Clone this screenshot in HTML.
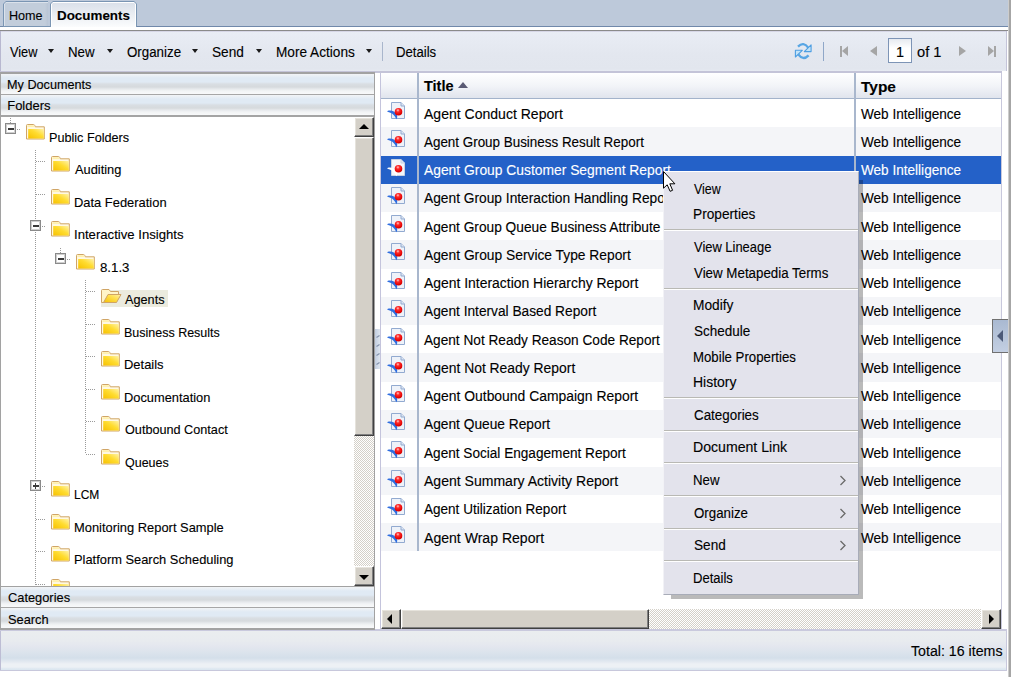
<!DOCTYPE html><html><head><meta charset="utf-8"><style>
html,body{margin:0;padding:0;width:1011px;height:677px;overflow:hidden;background:#fff;position:relative;font-family:"Liberation Sans", sans-serif;}
.t{position:absolute;white-space:nowrap;line-height:20px;}
div{box-sizing:border-box;}
</style></head><body>
<svg width="0" height="0" style="position:absolute"><defs>
<linearGradient id="fgrad" x1="0" y1="1" x2="1" y2="0"><stop offset="0" stop-color="#f7c100"/><stop offset="0.55" stop-color="#ffdc30"/><stop offset="1" stop-color="#fff2a8"/></linearGradient>
<linearGradient id="fgrad2" x1="0" y1="1" x2="1" y2="0"><stop offset="0" stop-color="#f5c000"/><stop offset="0.6" stop-color="#ffe050"/><stop offset="1" stop-color="#fff0b0"/></linearGradient>
<radialGradient id="ball" cx="0.42" cy="0.3" r="0.75"><stop offset="0" stop-color="#ffc8c8"/><stop offset="0.3" stop-color="#ff2a2a"/><stop offset="0.8" stop-color="#e00000"/><stop offset="1" stop-color="#b80000"/></radialGradient>
</defs></svg>
<div style="position:absolute;left:0px;top:0px;width:1011px;height:27px;background:#bdc9da;"></div>
<div style="position:absolute;left:0px;top:26px;width:50px;height:1px;background:#7088aa;"></div>
<div style="position:absolute;left:137px;top:26px;width:874px;height:1px;background:#7088aa;"></div>
<div style="position:absolute;left:0px;top:27px;width:1011px;height:3px;background:#fff;"></div>
<div style="position:absolute;left:0px;top:30px;width:1011px;height:1px;background:#8a8a8a;"></div>
<div style="position:absolute;left:3px;top:1px;width:45px;height:26px;background:#7a95b3;clip-path:polygon(3px 0,100% 0,100% 100%,0 100%,0 3px);"></div>
<div style="position:absolute;left:4px;top:2px;width:44px;height:24px;background:#dbe2eb;clip-path:polygon(2px 0,100% 0,100% 100%,0 100%,0 2px);"></div>
<div style="position:absolute;left:5px;top:3px;width:43px;height:23px;background:linear-gradient(90deg,#c2cddb 0,#c2cddb 40px,#b9c5d5 43px);clip-path:polygon(1px 0,100% 0,100% 100%,0 100%,0 1px);"></div>
<div style="position:absolute;left:3px;top:26px;width:48px;height:1px;background:#7a95b3;"></div>
<div class="t" style="left:9.23px;top:6px;font-size:13px;color:#000;font-weight:normal;transform:scaleX(0.9697);transform-origin:0 0;-webkit-text-stroke:0.12px currentColor;">Home</div>
<div style="position:absolute;left:50px;top:1px;width:87px;height:26px;background:#7a95b3;clip-path:polygon(3px 0,calc(100% - 3px) 0,100% 3px,100% 100%,0 100%,0 3px);"></div>
<div style="position:absolute;left:51px;top:2px;width:85px;height:25px;background:#ffffff;clip-path:polygon(2px 0,calc(100% - 2px) 0,100% 2px,100% 100%,0 100%,0 2px);"></div>
<div style="position:absolute;left:52px;top:3px;width:83px;height:24px;background:linear-gradient(#dbe1ea,#eef1f5 60%,#fbfcfd);clip-path:polygon(1px 0,calc(100% - 1px) 0,100% 1px,100% 100%,0 100%,0 1px);"></div>
<div class="t" style="left:57.47px;top:6px;font-size:13px;color:#000;font-weight:bold;transform:scaleX(1.0303);transform-origin:0 0;-webkit-text-stroke:0.12px currentColor;">Documents</div>
<div style="position:absolute;left:0px;top:31px;width:1007px;height:40px;background:linear-gradient(#e9edf5,#e3e7ef 60%,#e2e6ee 95%,#e7ebf2);border-left:1px solid #b8b8d0;border-right:1px solid #c4c4d8;"></div>
<div style="position:absolute;left:1px;top:31px;width:1005px;height:1px;background:#d6d6e6;"></div>
<div class="t" style="left:9.61px;top:42px;font-size:14px;color:#000;font-weight:normal;transform:scaleX(0.9100);transform-origin:0 0;-webkit-text-stroke:0.12px currentColor;">View</div>
<div style="position:absolute;left:48px;top:49px;width:0;height:0;border-left:3.5px solid transparent;border-right:3.5px solid transparent;border-top:4px solid #1a1a1a;"></div>
<div class="t" style="left:68.36px;top:42px;font-size:14px;color:#000;font-weight:normal;transform:scaleX(0.9480);transform-origin:0 0;-webkit-text-stroke:0.12px currentColor;">New</div>
<div style="position:absolute;left:107px;top:49px;width:0;height:0;border-left:3.5px solid transparent;border-right:3.5px solid transparent;border-top:4px solid #1a1a1a;"></div>
<div class="t" style="left:127.43px;top:42px;font-size:14px;color:#000;font-weight:normal;transform:scaleX(0.9514);transform-origin:0 0;-webkit-text-stroke:0.12px currentColor;">Organize</div>
<div style="position:absolute;left:192px;top:49px;width:0;height:0;border-left:3.5px solid transparent;border-right:3.5px solid transparent;border-top:4px solid #1a1a1a;"></div>
<div class="t" style="left:212.32px;top:42px;font-size:14px;color:#000;font-weight:normal;transform:scaleX(0.9743);transform-origin:0 0;-webkit-text-stroke:0.12px currentColor;">Send</div>
<div style="position:absolute;left:256px;top:49px;width:0;height:0;border-left:3.5px solid transparent;border-right:3.5px solid transparent;border-top:4px solid #1a1a1a;"></div>
<div class="t" style="left:276.03px;top:42px;font-size:14px;color:#000;font-weight:normal;transform:scaleX(0.9738);transform-origin:0 0;-webkit-text-stroke:0.12px currentColor;">More Actions</div>
<div style="position:absolute;left:366px;top:49px;width:0;height:0;border-left:3.5px solid transparent;border-right:3.5px solid transparent;border-top:4px solid #1a1a1a;"></div>
<div style="position:absolute;left:382px;top:42px;width:1px;height:19px;background:#a9b6cc;"></div>
<div class="t" style="left:396.27px;top:42px;font-size:14px;color:#000;font-weight:normal;transform:scaleX(0.9393);transform-origin:0 0;-webkit-text-stroke:0.12px currentColor;">Details</div>
<svg style="position:absolute;left:794px;top:42px" width="19" height="18" viewBox="0 0 19 18">
<path d="M4 4.6 Q9.5 -0.8 14.2 5.6" fill="none" stroke="#58a6e4" stroke-width="2.4"/>
<path d="M10.3 9.6 L17.1 9.6 L17.1 2.9 Z" fill="#c4e4f8" stroke="#4f9fe2" stroke-width="1.1" stroke-linejoin="round"/>
<path d="M14.6 13.3 Q9 19 4.3 12.4" fill="none" stroke="#58a6e4" stroke-width="2.4"/>
<path d="M8.3 8.3 L1.4 8.3 L1.4 15 Z" fill="#c4e4f8" stroke="#4f9fe2" stroke-width="1.1" stroke-linejoin="round"/>
</svg>
<div style="position:absolute;left:823px;top:42px;width:1px;height:19px;background:#8fa7c8;"></div>
<div style="position:absolute;left:840px;top:46px;width:2px;height:11px;background:#a5a5a5;"></div>
<div style="position:absolute;left:842px;top:46px;width:0;height:0;border-top:5.5px solid transparent;border-bottom:5.5px solid transparent;border-right:6px solid #a5a5a5;"></div>
<div style="position:absolute;left:870px;top:46px;width:0;height:0;border-top:5.5px solid transparent;border-bottom:5.5px solid transparent;border-right:7px solid #a5a5a5;"></div>
<div style="position:absolute;left:888px;top:38px;width:24px;height:25px;background:linear-gradient(#e6eaf0,#ffffff 40%);border:1px solid #7d94b6;"></div>
<div class="t" style="left:895.66px;top:42px;font-size:14px;color:#000;font-weight:normal;transform:scaleX(1.0333);transform-origin:0 0;-webkit-text-stroke:0.12px currentColor;">1</div>
<div class="t" style="left:917.17px;top:42px;font-size:14px;color:#000;font-weight:normal;transform:scaleX(1.0452);transform-origin:0 0;-webkit-text-stroke:0.12px currentColor;">of 1</div>
<div style="position:absolute;left:959px;top:46px;width:0;height:0;border-top:5.5px solid transparent;border-bottom:5.5px solid transparent;border-left:7px solid #a5a5a5;"></div>
<div style="position:absolute;left:988px;top:46px;width:0;height:0;border-top:5.5px solid transparent;border-bottom:5.5px solid transparent;border-left:6px solid #a5a5a5;"></div>
<div style="position:absolute;left:994px;top:46px;width:2px;height:11px;background:#a5a5a5;"></div>
<div style="position:absolute;left:1008px;top:0px;width:3px;height:677px;background:linear-gradient(90deg,#cdcdcd 0 1px,#a6a6a6 1px 3px);"></div>
<div style="position:absolute;left:0px;top:71px;width:1002px;height:2px;background:#c4c4d8;"></div>
<div style="position:absolute;left:0px;top:72px;width:375px;height:2px;background:#a2a2a2;"></div>
<div style="position:absolute;left:0px;top:74px;width:374px;height:20px;background:linear-gradient(#f2f4f6 0px,#e9eff5 2px,#e0eaf4 4px,#e0eaf4 8px,#d9dee3 10px,#d6dadd 13px,#e6e9ec 15px,#f2f4f5 17px,#f8f9fa 20px);"></div>
<div class="t" style="left:7.23px;top:75px;font-size:13px;color:#000;font-weight:normal;transform:scaleX(0.9741);transform-origin:0 0;-webkit-text-stroke:0.12px currentColor;">My Documents</div>
<div style="position:absolute;left:0px;top:94px;width:375px;height:1px;background:#a6a6a6;"></div>
<div style="position:absolute;left:0px;top:95px;width:374px;height:20px;background:linear-gradient(#f2f4f6 0px,#e9eff5 2px,#e0eaf4 4px,#e0eaf4 8px,#d9dee3 10px,#d6dadd 13px,#e6e9ec 15px,#f2f4f5 17px,#f8f9fa 20px);"></div>
<div class="t" style="left:7.20px;top:96px;font-size:13px;color:#000;font-weight:normal;-webkit-text-stroke:0.12px currentColor;">Folders</div>
<div style="position:absolute;left:0px;top:115px;width:375px;height:2px;background:#a4a4a4;"></div>
<div style="position:absolute;left:0px;top:117px;width:374px;height:469px;background:#fff;"></div>
<div style="position:absolute;left:0;top:116px;width:354px;height:470px;overflow:hidden;">
<div style="position:absolute;left:10px;top:2px;width:1px;height:5px;background:repeating-linear-gradient(180deg,#9a9a9a 0 1px,transparent 1px 2px);"></div>
<div style="position:absolute;left:35px;top:34px;width:1px;height:436px;background:repeating-linear-gradient(180deg,#9a9a9a 0 1px,transparent 1px 2px);"></div>
<div style="position:absolute;left:60px;top:132px;width:1px;height:5px;background:repeating-linear-gradient(180deg,#9a9a9a 0 1px,transparent 1px 2px);"></div>
<div style="position:absolute;left:85px;top:164px;width:1px;height:174px;background:repeating-linear-gradient(180deg,#9a9a9a 0 1px,transparent 1px 2px);"></div>
<div style="position:absolute;left:5px;top:7px;width:11px;height:11px;background:#fff;border:1px solid #8a8a8a;box-shadow:inset 0 0 0 1px #cfcfcf;"><div style="position:absolute;left:1.5px;top:3.8px;width:6px;height:1.8px;background:#3a3a3a;"></div></div>
<div style="position:absolute;left:17px;top:13px;width:4px;height:1px;background:repeating-linear-gradient(90deg,#9a9a9a 0 1px,transparent 1px 2px);"></div>
<svg style="position:absolute;left:26px;top:8px" width="20" height="17" viewBox="0 0 20 17">
<path d="M0.5 15 V1.5 Q0.5 0.5 1.5 0.5 H7.5 Q8.3 0.5 8.8 1.5 L9.3 2.8 H18.3 V15 Z" fill="#fff8e2" stroke="#d0a566" stroke-width="1"/>
<rect x="1.5" y="1.3" width="6.6" height="1.6" fill="#fff0a8"/>
<rect x="2.2" y="5" width="15.6" height="9.5" fill="url(#fgrad)"/>
</svg>
<div class="t" style="left:49.18px;top:12px;font-size:13px;color:#000;font-weight:normal;transform:scaleX(0.9722);transform-origin:0 0;-webkit-text-stroke:0.12px currentColor;">Public Folders</div>
<div style="position:absolute;left:36px;top:45px;width:9px;height:1px;background:repeating-linear-gradient(90deg,#9a9a9a 0 1px,transparent 1px 2px);"></div>
<svg style="position:absolute;left:51px;top:40px" width="20" height="17" viewBox="0 0 20 17">
<path d="M0.5 15 V1.5 Q0.5 0.5 1.5 0.5 H7.5 Q8.3 0.5 8.8 1.5 L9.3 2.8 H18.3 V15 Z" fill="#fff8e2" stroke="#d0a566" stroke-width="1"/>
<rect x="1.5" y="1.3" width="6.6" height="1.6" fill="#fff0a8"/>
<rect x="2.2" y="5" width="15.6" height="9.5" fill="url(#fgrad)"/>
</svg>
<div class="t" style="left:75.25px;top:44px;font-size:13px;color:#000;font-weight:normal;transform:scaleX(0.9859);transform-origin:0 0;-webkit-text-stroke:0.12px currentColor;">Auditing</div>
<div style="position:absolute;left:36px;top:78px;width:9px;height:1px;background:repeating-linear-gradient(90deg,#9a9a9a 0 1px,transparent 1px 2px);"></div>
<svg style="position:absolute;left:51px;top:73px" width="20" height="17" viewBox="0 0 20 17">
<path d="M0.5 15 V1.5 Q0.5 0.5 1.5 0.5 H7.5 Q8.3 0.5 8.8 1.5 L9.3 2.8 H18.3 V15 Z" fill="#fff8e2" stroke="#d0a566" stroke-width="1"/>
<rect x="1.5" y="1.3" width="6.6" height="1.6" fill="#fff0a8"/>
<rect x="2.2" y="5" width="15.6" height="9.5" fill="url(#fgrad)"/>
</svg>
<div class="t" style="left:74.16px;top:77px;font-size:13px;color:#000;font-weight:normal;transform:scaleX(0.9929);transform-origin:0 0;-webkit-text-stroke:0.12px currentColor;">Data Federation</div>
<div style="position:absolute;left:30px;top:104px;width:11px;height:11px;background:#fff;border:1px solid #8a8a8a;box-shadow:inset 0 0 0 1px #cfcfcf;"><div style="position:absolute;left:1.5px;top:3.8px;width:6px;height:1.8px;background:#3a3a3a;"></div></div>
<div style="position:absolute;left:42px;top:110px;width:4px;height:1px;background:repeating-linear-gradient(90deg,#9a9a9a 0 1px,transparent 1px 2px);"></div>
<svg style="position:absolute;left:51px;top:105px" width="20" height="17" viewBox="0 0 20 17">
<path d="M0.5 15 V1.5 Q0.5 0.5 1.5 0.5 H7.5 Q8.3 0.5 8.8 1.5 L9.3 2.8 H18.3 V15 Z" fill="#fff8e2" stroke="#d0a566" stroke-width="1"/>
<rect x="1.5" y="1.3" width="6.6" height="1.6" fill="#fff0a8"/>
<rect x="2.2" y="5" width="15.6" height="9.5" fill="url(#fgrad)"/>
</svg>
<div class="t" style="left:74.04px;top:109px;font-size:13px;color:#000;font-weight:normal;transform:scaleX(1.0108);transform-origin:0 0;-webkit-text-stroke:0.12px currentColor;">Interactive Insights</div>
<div style="position:absolute;left:55px;top:137px;width:11px;height:11px;background:#fff;border:1px solid #8a8a8a;box-shadow:inset 0 0 0 1px #cfcfcf;"><div style="position:absolute;left:1.5px;top:3.8px;width:6px;height:1.8px;background:#3a3a3a;"></div></div>
<div style="position:absolute;left:67px;top:143px;width:4px;height:1px;background:repeating-linear-gradient(90deg,#9a9a9a 0 1px,transparent 1px 2px);"></div>
<svg style="position:absolute;left:76px;top:138px" width="20" height="17" viewBox="0 0 20 17">
<path d="M0.5 15 V1.5 Q0.5 0.5 1.5 0.5 H7.5 Q8.3 0.5 8.8 1.5 L9.3 2.8 H18.3 V15 Z" fill="#fff8e2" stroke="#d0a566" stroke-width="1"/>
<rect x="1.5" y="1.3" width="6.6" height="1.6" fill="#fff0a8"/>
<rect x="2.2" y="5" width="15.6" height="9.5" fill="url(#fgrad)"/>
</svg>
<div class="t" style="left:99.64px;top:142px;font-size:13px;color:#000;font-weight:normal;transform:scaleX(1.0199);transform-origin:0 0;-webkit-text-stroke:0.12px currentColor;">8.1.3</div>
<div style="position:absolute;left:86px;top:175px;width:9px;height:1px;background:repeating-linear-gradient(90deg,#9a9a9a 0 1px,transparent 1px 2px);"></div>
<div style="position:absolute;left:101px;top:174px;width:67px;height:17px;background:#ebebde;"></div>
<svg style="position:absolute;left:101px;top:173px" width="22" height="16" viewBox="0 0 22 16">
<path d="M0.5 13.5 V1.5 Q0.5 0.5 1.5 0.5 H8 L9.5 2.5 H17.5 V5.5 L3 13.5 Z" fill="#fff4c8" stroke="#cfa465" stroke-width="1"/>
<path d="M2.5 13.5 L7 5.5 H20 L15.5 13.5 Z" fill="url(#fgrad2)" stroke="#cfa465" stroke-width="1"/>
</svg>
<div class="t" style="left:125.25px;top:174px;font-size:13px;color:#000;font-weight:normal;transform:scaleX(0.9763);transform-origin:0 0;-webkit-text-stroke:0.12px currentColor;">Agents</div>
<div style="position:absolute;left:86px;top:208px;width:9px;height:1px;background:repeating-linear-gradient(90deg,#9a9a9a 0 1px,transparent 1px 2px);"></div>
<svg style="position:absolute;left:101px;top:203px" width="20" height="17" viewBox="0 0 20 17">
<path d="M0.5 15 V1.5 Q0.5 0.5 1.5 0.5 H7.5 Q8.3 0.5 8.8 1.5 L9.3 2.8 H18.3 V15 Z" fill="#fff8e2" stroke="#d0a566" stroke-width="1"/>
<rect x="1.5" y="1.3" width="6.6" height="1.6" fill="#fff0a8"/>
<rect x="2.2" y="5" width="15.6" height="9.5" fill="url(#fgrad)"/>
</svg>
<div class="t" style="left:124.19px;top:207px;font-size:13px;color:#000;font-weight:normal;transform:scaleX(0.9608);transform-origin:0 0;-webkit-text-stroke:0.12px currentColor;">Business Results</div>
<div style="position:absolute;left:86px;top:240px;width:9px;height:1px;background:repeating-linear-gradient(90deg,#9a9a9a 0 1px,transparent 1px 2px);"></div>
<svg style="position:absolute;left:101px;top:235px" width="20" height="17" viewBox="0 0 20 17">
<path d="M0.5 15 V1.5 Q0.5 0.5 1.5 0.5 H7.5 Q8.3 0.5 8.8 1.5 L9.3 2.8 H18.3 V15 Z" fill="#fff8e2" stroke="#d0a566" stroke-width="1"/>
<rect x="1.5" y="1.3" width="6.6" height="1.6" fill="#fff0a8"/>
<rect x="2.2" y="5" width="15.6" height="9.5" fill="url(#fgrad)"/>
</svg>
<div class="t" style="left:124.15px;top:239px;font-size:13px;color:#000;font-weight:normal;transform:scaleX(0.9961);transform-origin:0 0;-webkit-text-stroke:0.12px currentColor;">Details</div>
<div style="position:absolute;left:86px;top:273px;width:9px;height:1px;background:repeating-linear-gradient(90deg,#9a9a9a 0 1px,transparent 1px 2px);"></div>
<svg style="position:absolute;left:101px;top:268px" width="20" height="17" viewBox="0 0 20 17">
<path d="M0.5 15 V1.5 Q0.5 0.5 1.5 0.5 H7.5 Q8.3 0.5 8.8 1.5 L9.3 2.8 H18.3 V15 Z" fill="#fff8e2" stroke="#d0a566" stroke-width="1"/>
<rect x="1.5" y="1.3" width="6.6" height="1.6" fill="#fff0a8"/>
<rect x="2.2" y="5" width="15.6" height="9.5" fill="url(#fgrad)"/>
</svg>
<div class="t" style="left:124.16px;top:272px;font-size:13px;color:#000;font-weight:normal;transform:scaleX(0.9877);transform-origin:0 0;-webkit-text-stroke:0.12px currentColor;">Documentation</div>
<div style="position:absolute;left:86px;top:305px;width:9px;height:1px;background:repeating-linear-gradient(90deg,#9a9a9a 0 1px,transparent 1px 2px);"></div>
<svg style="position:absolute;left:101px;top:300px" width="20" height="17" viewBox="0 0 20 17">
<path d="M0.5 15 V1.5 Q0.5 0.5 1.5 0.5 H7.5 Q8.3 0.5 8.8 1.5 L9.3 2.8 H18.3 V15 Z" fill="#fff8e2" stroke="#d0a566" stroke-width="1"/>
<rect x="1.5" y="1.3" width="6.6" height="1.6" fill="#fff0a8"/>
<rect x="2.2" y="5" width="15.6" height="9.5" fill="url(#fgrad)"/>
</svg>
<div class="t" style="left:124.67px;top:304px;font-size:13px;color:#000;font-weight:normal;transform:scaleX(0.9738);transform-origin:0 0;-webkit-text-stroke:0.12px currentColor;">Outbound Contact</div>
<div style="position:absolute;left:86px;top:338px;width:9px;height:1px;background:repeating-linear-gradient(90deg,#9a9a9a 0 1px,transparent 1px 2px);"></div>
<svg style="position:absolute;left:101px;top:333px" width="20" height="17" viewBox="0 0 20 17">
<path d="M0.5 15 V1.5 Q0.5 0.5 1.5 0.5 H7.5 Q8.3 0.5 8.8 1.5 L9.3 2.8 H18.3 V15 Z" fill="#fff8e2" stroke="#d0a566" stroke-width="1"/>
<rect x="1.5" y="1.3" width="6.6" height="1.6" fill="#fff0a8"/>
<rect x="2.2" y="5" width="15.6" height="9.5" fill="url(#fgrad)"/>
</svg>
<div class="t" style="left:124.67px;top:337px;font-size:13px;color:#000;font-weight:normal;transform:scaleX(0.9606);transform-origin:0 0;-webkit-text-stroke:0.12px currentColor;">Queues</div>
<div style="position:absolute;left:30px;top:364px;width:11px;height:11px;background:#fff;border:1px solid #8a8a8a;box-shadow:inset 0 0 0 1px #cfcfcf;"><div style="position:absolute;left:1.5px;top:3.8px;width:6px;height:1.8px;background:#3a3a3a;"></div><div style="position:absolute;left:3.6px;top:1.7px;width:1.8px;height:6px;background:#3a3a3a;"></div></div>
<div style="position:absolute;left:42px;top:370px;width:4px;height:1px;background:repeating-linear-gradient(90deg,#9a9a9a 0 1px,transparent 1px 2px);"></div>
<svg style="position:absolute;left:51px;top:365px" width="20" height="17" viewBox="0 0 20 17">
<path d="M0.5 15 V1.5 Q0.5 0.5 1.5 0.5 H7.5 Q8.3 0.5 8.8 1.5 L9.3 2.8 H18.3 V15 Z" fill="#fff8e2" stroke="#d0a566" stroke-width="1"/>
<rect x="1.5" y="1.3" width="6.6" height="1.6" fill="#fff0a8"/>
<rect x="2.2" y="5" width="15.6" height="9.5" fill="url(#fgrad)"/>
</svg>
<div class="t" style="left:74.23px;top:369px;font-size:13px;color:#000;font-weight:normal;transform:scaleX(0.9229);transform-origin:0 0;-webkit-text-stroke:0.12px currentColor;">LCM</div>
<div style="position:absolute;left:36px;top:403px;width:9px;height:1px;background:repeating-linear-gradient(90deg,#9a9a9a 0 1px,transparent 1px 2px);"></div>
<svg style="position:absolute;left:51px;top:398px" width="20" height="17" viewBox="0 0 20 17">
<path d="M0.5 15 V1.5 Q0.5 0.5 1.5 0.5 H7.5 Q8.3 0.5 8.8 1.5 L9.3 2.8 H18.3 V15 Z" fill="#fff8e2" stroke="#d0a566" stroke-width="1"/>
<rect x="1.5" y="1.3" width="6.6" height="1.6" fill="#fff0a8"/>
<rect x="2.2" y="5" width="15.6" height="9.5" fill="url(#fgrad)"/>
</svg>
<div class="t" style="left:74.16px;top:402px;font-size:13px;color:#000;font-weight:normal;transform:scaleX(0.9916);transform-origin:0 0;-webkit-text-stroke:0.12px currentColor;">Monitoring Report Sample</div>
<div style="position:absolute;left:36px;top:435px;width:9px;height:1px;background:repeating-linear-gradient(90deg,#9a9a9a 0 1px,transparent 1px 2px);"></div>
<svg style="position:absolute;left:51px;top:430px" width="20" height="17" viewBox="0 0 20 17">
<path d="M0.5 15 V1.5 Q0.5 0.5 1.5 0.5 H7.5 Q8.3 0.5 8.8 1.5 L9.3 2.8 H18.3 V15 Z" fill="#fff8e2" stroke="#d0a566" stroke-width="1"/>
<rect x="1.5" y="1.3" width="6.6" height="1.6" fill="#fff0a8"/>
<rect x="2.2" y="5" width="15.6" height="9.5" fill="url(#fgrad)"/>
</svg>
<div class="t" style="left:74.16px;top:434px;font-size:13px;color:#000;font-weight:normal;transform:scaleX(0.9896);transform-origin:0 0;-webkit-text-stroke:0.12px currentColor;">Platform Search Scheduling</div>
<div style="position:absolute;left:36px;top:468px;width:9px;height:1px;background:repeating-linear-gradient(90deg,#9a9a9a 0 1px,transparent 1px 2px);"></div>
<svg style="position:absolute;left:51px;top:463px" width="20" height="17" viewBox="0 0 20 17">
<path d="M0.5 15 V1.5 Q0.5 0.5 1.5 0.5 H7.5 Q8.3 0.5 8.8 1.5 L9.3 2.8 H18.3 V15 Z" fill="#fff8e2" stroke="#d0a566" stroke-width="1"/>
<rect x="1.5" y="1.3" width="6.6" height="1.6" fill="#fff0a8"/>
<rect x="2.2" y="5" width="15.6" height="9.5" fill="url(#fgrad)"/>
</svg>
</div>
<div style="position:absolute;left:354px;top:117px;width:20px;height:469px;background:repeating-conic-gradient(#d4d0c8 0 25%, #ffffff 0 50%) 0 0/2px 2px;"></div>
<div style="position:absolute;left:354px;top:117px;width:20px;height:20px;background:#d4d0c8;border-top:1px solid #fff;border-left:1px solid #fff;border-right:1px solid #404040;border-bottom:1px solid #404040;box-shadow:inset -1px -1px 0 #808080, inset 1px 1px 0 #e6e3dc;"></div>
<div style="position:absolute;left:359px;top:124px;width:0;height:0;border-left:5px solid transparent;border-right:5px solid transparent;border-bottom:5px solid #000;"></div>
<div style="position:absolute;left:354px;top:137px;width:20px;height:299px;background:#d4d0c8;border-top:1px solid #fff;border-left:1px solid #fff;border-right:1px solid #404040;border-bottom:1px solid #404040;box-shadow:inset -1px -1px 0 #808080, inset 1px 1px 0 #e6e3dc;"></div>
<div style="position:absolute;left:354px;top:566px;width:20px;height:20px;background:#d4d0c8;border-top:1px solid #fff;border-left:1px solid #fff;border-right:1px solid #404040;border-bottom:1px solid #404040;box-shadow:inset -1px -1px 0 #808080, inset 1px 1px 0 #e6e3dc;"></div>
<div style="position:absolute;left:359px;top:575px;width:0;height:0;border-left:5px solid transparent;border-right:5px solid transparent;border-top:5px solid #000;"></div>
<div style="position:absolute;left:0px;top:586px;width:375px;height:1px;background:#a2a2a2;"></div>
<div style="position:absolute;left:0px;top:587px;width:374px;height:20px;background:linear-gradient(#f2f4f6 0px,#e9eff5 2px,#e0eaf4 4px,#e0eaf4 8px,#d9dee3 10px,#d6dadd 13px,#e6e9ec 15px,#f2f4f5 17px,#f8f9fa 20px);"></div>
<div class="t" style="left:7.61px;top:588px;font-size:13px;color:#000;font-weight:normal;transform:scaleX(0.9870);transform-origin:0 0;-webkit-text-stroke:0.12px currentColor;">Categories</div>
<div style="position:absolute;left:0px;top:607px;width:375px;height:1px;background:#a6a6a6;"></div>
<div style="position:absolute;left:0px;top:608px;width:374px;height:20px;background:linear-gradient(#f2f4f6 0px,#e9eff5 2px,#e0eaf4 4px,#e0eaf4 8px,#d9dee3 10px,#d6dadd 13px,#e6e9ec 15px,#f2f4f5 17px,#f8f9fa 20px);"></div>
<div class="t" style="left:7.71px;top:610px;font-size:13px;color:#000;font-weight:normal;transform:scaleX(0.9874);transform-origin:0 0;-webkit-text-stroke:0.12px currentColor;">Search</div>
<div style="position:absolute;left:0px;top:628px;width:375px;height:2px;background:#a2a2a2;"></div>
<div style="position:absolute;left:0px;top:72px;width:1px;height:558px;background:#a2a2a2;"></div>
<div style="position:absolute;left:374px;top:72px;width:1px;height:558px;background:#a2a2a2;"></div>
<div style="position:absolute;left:380px;top:73px;width:1px;height:557px;background:#c4c4dc;"></div>
<div style="position:absolute;left:375px;top:329px;width:5px;height:40px;background:linear-gradient(90deg,#c2cee0,#dde5ef);"></div>
<svg style="position:absolute;left:376px;top:335px" width="4" height="3" viewBox="0 0 4 3"><path d="M0.5 2.5 L3.5 0.5" stroke="#8392ac" stroke-width="1.2"/></svg>
<svg style="position:absolute;left:376px;top:344px" width="4" height="3" viewBox="0 0 4 3"><path d="M0.5 2.5 L3.5 0.5" stroke="#8392ac" stroke-width="1.2"/></svg>
<svg style="position:absolute;left:376px;top:353px" width="4" height="3" viewBox="0 0 4 3"><path d="M0.5 2.5 L3.5 0.5" stroke="#8392ac" stroke-width="1.2"/></svg>
<svg style="position:absolute;left:376px;top:362px" width="4" height="3" viewBox="0 0 4 3"><path d="M0.5 2.5 L3.5 0.5" stroke="#8392ac" stroke-width="1.2"/></svg>
<div style="position:absolute;left:381px;top:73px;width:620px;height:26px;background:linear-gradient(#ffffff,#f2f4f8 50%,#dfe3ec);"></div>
<div style="position:absolute;left:381px;top:98px;width:620px;height:1px;background:#a3b3cb;"></div>
<div class="t" style="left:423.99px;top:76px;font-size:14px;color:#000;font-weight:bold;transform:scaleX(1.0358);transform-origin:0 0;-webkit-text-stroke:0.12px currentColor;">Title</div>
<div style="position:absolute;left:457.5px;top:82px;width:0;height:0;border-left:5px solid transparent;border-right:5px solid transparent;border-bottom:6px solid #5a5a74;"></div>
<div class="t" style="left:860.78px;top:77px;font-size:14px;color:#000;font-weight:bold;transform:scaleX(1.1032);transform-origin:0 0;-webkit-text-stroke:0.12px currentColor;">Type</div>
<div style="position:absolute;left:381px;top:99.00px;width:620px;height:28.27px;background:#ffffff;"></div>
<svg style="position:absolute;left:387px;top:101px" width="20" height="20" viewBox="0 0 20 20">
<path d="M4.5 1.5 H14 L17.5 5 V17.5 H4.5 Z" fill="#eef2f9" stroke="#92aad0" stroke-width="1"/>
<path d="M14 1.5 V5 H17.5" fill="#dde6f2" stroke="#92aad0" stroke-width="1"/>
<path d="M0.4 9.9 C4 8.8 8 10 9.8 13.8 C10.6 15.5 10.3 17.3 9.3 18.3 C8.3 16 7 13.8 5 12.5 C3.5 11.5 2 11 0.4 10.7 Z" fill="#2f6ee0"/>
<circle cx="11.5" cy="10.8" r="3.8" fill="url(#ball)"/>
</svg>
<div class="t" style="left:424.00px;top:104px;font-size:14px;color:#000;font-weight:normal;transform:scaleX(1.0022);transform-origin:0 0;-webkit-text-stroke:0.12px currentColor;">Agent Conduct Report</div>
<div class="t" style="left:861.30px;top:104px;font-size:14px;color:#000;font-weight:normal;transform:scaleX(0.9698);transform-origin:0 0;-webkit-text-stroke:0.12px currentColor;">Web Intelligence</div>
<div style="position:absolute;left:381px;top:127.27px;width:620px;height:28.27px;background:#f4f5f8;"></div>
<svg style="position:absolute;left:387px;top:129px" width="20" height="20" viewBox="0 0 20 20">
<path d="M4.5 1.5 H14 L17.5 5 V17.5 H4.5 Z" fill="#eef2f9" stroke="#92aad0" stroke-width="1"/>
<path d="M14 1.5 V5 H17.5" fill="#dde6f2" stroke="#92aad0" stroke-width="1"/>
<path d="M0.4 9.9 C4 8.8 8 10 9.8 13.8 C10.6 15.5 10.3 17.3 9.3 18.3 C8.3 16 7 13.8 5 12.5 C3.5 11.5 2 11 0.4 10.7 Z" fill="#2f6ee0"/>
<circle cx="11.5" cy="10.8" r="3.8" fill="url(#ball)"/>
</svg>
<div class="t" style="left:424.00px;top:132px;font-size:14px;color:#000;font-weight:normal;transform:scaleX(0.9577);transform-origin:0 0;-webkit-text-stroke:0.12px currentColor;">Agent Group Business Result Report</div>
<div class="t" style="left:861.30px;top:132px;font-size:14px;color:#000;font-weight:normal;transform:scaleX(0.9698);transform-origin:0 0;-webkit-text-stroke:0.12px currentColor;">Web Intelligence</div>
<div style="position:absolute;left:381px;top:155.54px;width:620px;height:28.27px;background:#2461c8;"></div>
<svg style="position:absolute;left:387px;top:158px" width="20" height="20" viewBox="0 0 20 20">
<path d="M4.5 1.5 H14 L17.5 5 V17.5 H4.5 Z" fill="#f4f6fa" stroke="#c8d2e2" stroke-width="1"/>
<path d="M14 1.5 V5 H17.5" fill="#dde6f2" stroke="#c8d2e2" stroke-width="1"/>
<path d="M0.4 9.9 C4 8.8 8 10 9.8 13.8 C10.6 15.5 10.3 17.3 9.3 18.3 C8.3 16 7 13.8 5 12.5 C3.5 11.5 2 11 0.4 10.7 Z" fill="#ffffff"/>
<circle cx="11.5" cy="10.8" r="3.8" fill="url(#ball)"/>
</svg>
<div class="t" style="left:424.00px;top:160px;font-size:14px;color:#fff;font-weight:normal;transform:scaleX(0.9884);transform-origin:0 0;-webkit-text-stroke:0.12px currentColor;">Agent Group Customer Segment Report</div>
<div class="t" style="left:861.30px;top:160px;font-size:14px;color:#fff;font-weight:normal;transform:scaleX(0.9698);transform-origin:0 0;-webkit-text-stroke:0.12px currentColor;">Web Intelligence</div>
<div style="position:absolute;left:381px;top:183.81px;width:620px;height:28.27px;background:#f4f5f8;"></div>
<svg style="position:absolute;left:387px;top:186px" width="20" height="20" viewBox="0 0 20 20">
<path d="M4.5 1.5 H14 L17.5 5 V17.5 H4.5 Z" fill="#eef2f9" stroke="#92aad0" stroke-width="1"/>
<path d="M14 1.5 V5 H17.5" fill="#dde6f2" stroke="#92aad0" stroke-width="1"/>
<path d="M0.4 9.9 C4 8.8 8 10 9.8 13.8 C10.6 15.5 10.3 17.3 9.3 18.3 C8.3 16 7 13.8 5 12.5 C3.5 11.5 2 11 0.4 10.7 Z" fill="#2f6ee0"/>
<circle cx="11.5" cy="10.8" r="3.8" fill="url(#ball)"/>
</svg>
<div class="t" style="left:424.00px;top:188px;font-size:14px;color:#000;font-weight:normal;transform:scaleX(0.9826);transform-origin:0 0;-webkit-text-stroke:0.12px currentColor;">Agent Group Interaction Handling Report</div>
<div class="t" style="left:861.30px;top:188px;font-size:14px;color:#000;font-weight:normal;transform:scaleX(0.9698);transform-origin:0 0;-webkit-text-stroke:0.12px currentColor;">Web Intelligence</div>
<div style="position:absolute;left:381px;top:212.08px;width:620px;height:28.27px;background:#ffffff;"></div>
<svg style="position:absolute;left:387px;top:214px" width="20" height="20" viewBox="0 0 20 20">
<path d="M4.5 1.5 H14 L17.5 5 V17.5 H4.5 Z" fill="#eef2f9" stroke="#92aad0" stroke-width="1"/>
<path d="M14 1.5 V5 H17.5" fill="#dde6f2" stroke="#92aad0" stroke-width="1"/>
<path d="M0.4 9.9 C4 8.8 8 10 9.8 13.8 C10.6 15.5 10.3 17.3 9.3 18.3 C8.3 16 7 13.8 5 12.5 C3.5 11.5 2 11 0.4 10.7 Z" fill="#2f6ee0"/>
<circle cx="11.5" cy="10.8" r="3.8" fill="url(#ball)"/>
</svg>
<div class="t" style="left:424.00px;top:217px;font-size:14px;color:#000;font-weight:normal;transform:scaleX(0.9800);transform-origin:0 0;-webkit-text-stroke:0.12px currentColor;">Agent Group Queue Business Attribute Report</div>
<div class="t" style="left:861.30px;top:217px;font-size:14px;color:#000;font-weight:normal;transform:scaleX(0.9698);transform-origin:0 0;-webkit-text-stroke:0.12px currentColor;">Web Intelligence</div>
<div style="position:absolute;left:381px;top:240.35px;width:620px;height:28.27px;background:#f4f5f8;"></div>
<svg style="position:absolute;left:387px;top:242px" width="20" height="20" viewBox="0 0 20 20">
<path d="M4.5 1.5 H14 L17.5 5 V17.5 H4.5 Z" fill="#eef2f9" stroke="#92aad0" stroke-width="1"/>
<path d="M14 1.5 V5 H17.5" fill="#dde6f2" stroke="#92aad0" stroke-width="1"/>
<path d="M0.4 9.9 C4 8.8 8 10 9.8 13.8 C10.6 15.5 10.3 17.3 9.3 18.3 C8.3 16 7 13.8 5 12.5 C3.5 11.5 2 11 0.4 10.7 Z" fill="#2f6ee0"/>
<circle cx="11.5" cy="10.8" r="3.8" fill="url(#ball)"/>
</svg>
<div class="t" style="left:424.00px;top:245px;font-size:14px;color:#000;font-weight:normal;transform:scaleX(0.9852);transform-origin:0 0;-webkit-text-stroke:0.12px currentColor;">Agent Group Service Type Report</div>
<div class="t" style="left:861.30px;top:245px;font-size:14px;color:#000;font-weight:normal;transform:scaleX(0.9698);transform-origin:0 0;-webkit-text-stroke:0.12px currentColor;">Web Intelligence</div>
<div style="position:absolute;left:381px;top:268.62px;width:620px;height:28.27px;background:#ffffff;"></div>
<svg style="position:absolute;left:387px;top:271px" width="20" height="20" viewBox="0 0 20 20">
<path d="M4.5 1.5 H14 L17.5 5 V17.5 H4.5 Z" fill="#eef2f9" stroke="#92aad0" stroke-width="1"/>
<path d="M14 1.5 V5 H17.5" fill="#dde6f2" stroke="#92aad0" stroke-width="1"/>
<path d="M0.4 9.9 C4 8.8 8 10 9.8 13.8 C10.6 15.5 10.3 17.3 9.3 18.3 C8.3 16 7 13.8 5 12.5 C3.5 11.5 2 11 0.4 10.7 Z" fill="#2f6ee0"/>
<circle cx="11.5" cy="10.8" r="3.8" fill="url(#ball)"/>
</svg>
<div class="t" style="left:424.00px;top:273px;font-size:14px;color:#000;font-weight:normal;transform:scaleX(0.9940);transform-origin:0 0;-webkit-text-stroke:0.12px currentColor;">Agent Interaction Hierarchy Report</div>
<div class="t" style="left:861.30px;top:273px;font-size:14px;color:#000;font-weight:normal;transform:scaleX(0.9698);transform-origin:0 0;-webkit-text-stroke:0.12px currentColor;">Web Intelligence</div>
<div style="position:absolute;left:381px;top:296.89px;width:620px;height:28.27px;background:#f4f5f8;"></div>
<svg style="position:absolute;left:387px;top:299px" width="20" height="20" viewBox="0 0 20 20">
<path d="M4.5 1.5 H14 L17.5 5 V17.5 H4.5 Z" fill="#eef2f9" stroke="#92aad0" stroke-width="1"/>
<path d="M14 1.5 V5 H17.5" fill="#dde6f2" stroke="#92aad0" stroke-width="1"/>
<path d="M0.4 9.9 C4 8.8 8 10 9.8 13.8 C10.6 15.5 10.3 17.3 9.3 18.3 C8.3 16 7 13.8 5 12.5 C3.5 11.5 2 11 0.4 10.7 Z" fill="#2f6ee0"/>
<circle cx="11.5" cy="10.8" r="3.8" fill="url(#ball)"/>
</svg>
<div class="t" style="left:424.00px;top:301px;font-size:14px;color:#000;font-weight:normal;transform:scaleX(0.9795);transform-origin:0 0;-webkit-text-stroke:0.12px currentColor;">Agent Interval Based Report</div>
<div class="t" style="left:861.30px;top:301px;font-size:14px;color:#000;font-weight:normal;transform:scaleX(0.9698);transform-origin:0 0;-webkit-text-stroke:0.12px currentColor;">Web Intelligence</div>
<div style="position:absolute;left:381px;top:325.16px;width:620px;height:28.27px;background:#ffffff;"></div>
<svg style="position:absolute;left:387px;top:327px" width="20" height="20" viewBox="0 0 20 20">
<path d="M4.5 1.5 H14 L17.5 5 V17.5 H4.5 Z" fill="#eef2f9" stroke="#92aad0" stroke-width="1"/>
<path d="M14 1.5 V5 H17.5" fill="#dde6f2" stroke="#92aad0" stroke-width="1"/>
<path d="M0.4 9.9 C4 8.8 8 10 9.8 13.8 C10.6 15.5 10.3 17.3 9.3 18.3 C8.3 16 7 13.8 5 12.5 C3.5 11.5 2 11 0.4 10.7 Z" fill="#2f6ee0"/>
<circle cx="11.5" cy="10.8" r="3.8" fill="url(#ball)"/>
</svg>
<div class="t" style="left:424.00px;top:330px;font-size:14px;color:#000;font-weight:normal;transform:scaleX(0.9744);transform-origin:0 0;-webkit-text-stroke:0.12px currentColor;">Agent Not Ready Reason Code Report</div>
<div class="t" style="left:861.30px;top:330px;font-size:14px;color:#000;font-weight:normal;transform:scaleX(0.9698);transform-origin:0 0;-webkit-text-stroke:0.12px currentColor;">Web Intelligence</div>
<div style="position:absolute;left:381px;top:353.43px;width:620px;height:28.27px;background:#f4f5f8;"></div>
<svg style="position:absolute;left:387px;top:355px" width="20" height="20" viewBox="0 0 20 20">
<path d="M4.5 1.5 H14 L17.5 5 V17.5 H4.5 Z" fill="#eef2f9" stroke="#92aad0" stroke-width="1"/>
<path d="M14 1.5 V5 H17.5" fill="#dde6f2" stroke="#92aad0" stroke-width="1"/>
<path d="M0.4 9.9 C4 8.8 8 10 9.8 13.8 C10.6 15.5 10.3 17.3 9.3 18.3 C8.3 16 7 13.8 5 12.5 C3.5 11.5 2 11 0.4 10.7 Z" fill="#2f6ee0"/>
<circle cx="11.5" cy="10.8" r="3.8" fill="url(#ball)"/>
</svg>
<div class="t" style="left:424.00px;top:358px;font-size:14px;color:#000;font-weight:normal;transform:scaleX(0.9915);transform-origin:0 0;-webkit-text-stroke:0.12px currentColor;">Agent Not Ready Report</div>
<div class="t" style="left:861.30px;top:358px;font-size:14px;color:#000;font-weight:normal;transform:scaleX(0.9698);transform-origin:0 0;-webkit-text-stroke:0.12px currentColor;">Web Intelligence</div>
<div style="position:absolute;left:381px;top:381.70px;width:620px;height:28.27px;background:#ffffff;"></div>
<svg style="position:absolute;left:387px;top:384px" width="20" height="20" viewBox="0 0 20 20">
<path d="M4.5 1.5 H14 L17.5 5 V17.5 H4.5 Z" fill="#eef2f9" stroke="#92aad0" stroke-width="1"/>
<path d="M14 1.5 V5 H17.5" fill="#dde6f2" stroke="#92aad0" stroke-width="1"/>
<path d="M0.4 9.9 C4 8.8 8 10 9.8 13.8 C10.6 15.5 10.3 17.3 9.3 18.3 C8.3 16 7 13.8 5 12.5 C3.5 11.5 2 11 0.4 10.7 Z" fill="#2f6ee0"/>
<circle cx="11.5" cy="10.8" r="3.8" fill="url(#ball)"/>
</svg>
<div class="t" style="left:424.00px;top:386px;font-size:14px;color:#000;font-weight:normal;transform:scaleX(0.9935);transform-origin:0 0;-webkit-text-stroke:0.12px currentColor;">Agent Outbound Campaign Report</div>
<div class="t" style="left:861.30px;top:386px;font-size:14px;color:#000;font-weight:normal;transform:scaleX(0.9698);transform-origin:0 0;-webkit-text-stroke:0.12px currentColor;">Web Intelligence</div>
<div style="position:absolute;left:381px;top:409.97px;width:620px;height:28.27px;background:#f4f5f8;"></div>
<svg style="position:absolute;left:387px;top:412px" width="20" height="20" viewBox="0 0 20 20">
<path d="M4.5 1.5 H14 L17.5 5 V17.5 H4.5 Z" fill="#eef2f9" stroke="#92aad0" stroke-width="1"/>
<path d="M14 1.5 V5 H17.5" fill="#dde6f2" stroke="#92aad0" stroke-width="1"/>
<path d="M0.4 9.9 C4 8.8 8 10 9.8 13.8 C10.6 15.5 10.3 17.3 9.3 18.3 C8.3 16 7 13.8 5 12.5 C3.5 11.5 2 11 0.4 10.7 Z" fill="#2f6ee0"/>
<circle cx="11.5" cy="10.8" r="3.8" fill="url(#ball)"/>
</svg>
<div class="t" style="left:424.00px;top:414px;font-size:14px;color:#000;font-weight:normal;transform:scaleX(0.9813);transform-origin:0 0;-webkit-text-stroke:0.12px currentColor;">Agent Queue Report</div>
<div class="t" style="left:861.30px;top:414px;font-size:14px;color:#000;font-weight:normal;transform:scaleX(0.9698);transform-origin:0 0;-webkit-text-stroke:0.12px currentColor;">Web Intelligence</div>
<div style="position:absolute;left:381px;top:438.24px;width:620px;height:28.27px;background:#ffffff;"></div>
<svg style="position:absolute;left:387px;top:440px" width="20" height="20" viewBox="0 0 20 20">
<path d="M4.5 1.5 H14 L17.5 5 V17.5 H4.5 Z" fill="#eef2f9" stroke="#92aad0" stroke-width="1"/>
<path d="M14 1.5 V5 H17.5" fill="#dde6f2" stroke="#92aad0" stroke-width="1"/>
<path d="M0.4 9.9 C4 8.8 8 10 9.8 13.8 C10.6 15.5 10.3 17.3 9.3 18.3 C8.3 16 7 13.8 5 12.5 C3.5 11.5 2 11 0.4 10.7 Z" fill="#2f6ee0"/>
<circle cx="11.5" cy="10.8" r="3.8" fill="url(#ball)"/>
</svg>
<div class="t" style="left:424.00px;top:443px;font-size:14px;color:#000;font-weight:normal;transform:scaleX(0.9716);transform-origin:0 0;-webkit-text-stroke:0.12px currentColor;">Agent Social Engagement Report</div>
<div class="t" style="left:861.30px;top:443px;font-size:14px;color:#000;font-weight:normal;transform:scaleX(0.9698);transform-origin:0 0;-webkit-text-stroke:0.12px currentColor;">Web Intelligence</div>
<div style="position:absolute;left:381px;top:466.51px;width:620px;height:28.27px;background:#f4f5f8;"></div>
<svg style="position:absolute;left:387px;top:469px" width="20" height="20" viewBox="0 0 20 20">
<path d="M4.5 1.5 H14 L17.5 5 V17.5 H4.5 Z" fill="#eef2f9" stroke="#92aad0" stroke-width="1"/>
<path d="M14 1.5 V5 H17.5" fill="#dde6f2" stroke="#92aad0" stroke-width="1"/>
<path d="M0.4 9.9 C4 8.8 8 10 9.8 13.8 C10.6 15.5 10.3 17.3 9.3 18.3 C8.3 16 7 13.8 5 12.5 C3.5 11.5 2 11 0.4 10.7 Z" fill="#2f6ee0"/>
<circle cx="11.5" cy="10.8" r="3.8" fill="url(#ball)"/>
</svg>
<div class="t" style="left:424.00px;top:471px;font-size:14px;color:#000;font-weight:normal;transform:scaleX(1.0021);transform-origin:0 0;-webkit-text-stroke:0.12px currentColor;">Agent Summary Activity Report</div>
<div class="t" style="left:861.30px;top:471px;font-size:14px;color:#000;font-weight:normal;transform:scaleX(0.9698);transform-origin:0 0;-webkit-text-stroke:0.12px currentColor;">Web Intelligence</div>
<div style="position:absolute;left:381px;top:494.78px;width:620px;height:28.27px;background:#ffffff;"></div>
<svg style="position:absolute;left:387px;top:497px" width="20" height="20" viewBox="0 0 20 20">
<path d="M4.5 1.5 H14 L17.5 5 V17.5 H4.5 Z" fill="#eef2f9" stroke="#92aad0" stroke-width="1"/>
<path d="M14 1.5 V5 H17.5" fill="#dde6f2" stroke="#92aad0" stroke-width="1"/>
<path d="M0.4 9.9 C4 8.8 8 10 9.8 13.8 C10.6 15.5 10.3 17.3 9.3 18.3 C8.3 16 7 13.8 5 12.5 C3.5 11.5 2 11 0.4 10.7 Z" fill="#2f6ee0"/>
<circle cx="11.5" cy="10.8" r="3.8" fill="url(#ball)"/>
</svg>
<div class="t" style="left:424.00px;top:499px;font-size:14px;color:#000;font-weight:normal;transform:scaleX(0.9667);transform-origin:0 0;-webkit-text-stroke:0.12px currentColor;">Agent Utilization Report</div>
<div class="t" style="left:861.30px;top:499px;font-size:14px;color:#000;font-weight:normal;transform:scaleX(0.9698);transform-origin:0 0;-webkit-text-stroke:0.12px currentColor;">Web Intelligence</div>
<div style="position:absolute;left:381px;top:523.05px;width:620px;height:28.27px;background:#f4f5f8;"></div>
<svg style="position:absolute;left:387px;top:525px" width="20" height="20" viewBox="0 0 20 20">
<path d="M4.5 1.5 H14 L17.5 5 V17.5 H4.5 Z" fill="#eef2f9" stroke="#92aad0" stroke-width="1"/>
<path d="M14 1.5 V5 H17.5" fill="#dde6f2" stroke="#92aad0" stroke-width="1"/>
<path d="M0.4 9.9 C4 8.8 8 10 9.8 13.8 C10.6 15.5 10.3 17.3 9.3 18.3 C8.3 16 7 13.8 5 12.5 C3.5 11.5 2 11 0.4 10.7 Z" fill="#2f6ee0"/>
<circle cx="11.5" cy="10.8" r="3.8" fill="url(#ball)"/>
</svg>
<div class="t" style="left:424.00px;top:528px;font-size:14px;color:#000;font-weight:normal;transform:scaleX(1.0042);transform-origin:0 0;-webkit-text-stroke:0.12px currentColor;">Agent Wrap Report</div>
<div class="t" style="left:861.30px;top:528px;font-size:14px;color:#000;font-weight:normal;transform:scaleX(0.9698);transform-origin:0 0;-webkit-text-stroke:0.12px currentColor;">Web Intelligence</div>
<div style="position:absolute;left:417px;top:73px;width:2px;height:478px;background:#a9b7cd;"></div>
<div style="position:absolute;left:854px;top:73px;width:2px;height:478px;background:#a9b7cd;"></div>
<div style="position:absolute;left:1001px;top:73px;width:1px;height:557px;background:#c8c8dc;"></div>
<div style="position:absolute;left:381px;top:609px;width:620px;height:20px;background:repeating-conic-gradient(#d4d0c8 0 25%, #ffffff 0 50%) 0 0/2px 2px;"></div>
<div style="position:absolute;left:381px;top:609px;width:20px;height:20px;background:#d4d0c8;border-top:1px solid #fff;border-left:1px solid #fff;border-right:1px solid #404040;border-bottom:1px solid #404040;box-shadow:inset -1px -1px 0 #808080, inset 1px 1px 0 #e6e3dc;"></div>
<div style="position:absolute;left:387px;top:614px;width:0;height:0;border-top:5px solid transparent;border-bottom:5px solid transparent;border-right:5px solid #000;"></div>
<div style="position:absolute;left:401px;top:609px;width:248px;height:20px;background:#d4d0c8;border-top:1px solid #fff;border-left:1px solid #fff;border-right:1px solid #404040;border-bottom:1px solid #404040;box-shadow:inset -1px -1px 0 #808080, inset 1px 1px 0 #e6e3dc;"></div>
<div style="position:absolute;left:981px;top:609px;width:20px;height:20px;background:#d4d0c8;border-top:1px solid #fff;border-left:1px solid #fff;border-right:1px solid #404040;border-bottom:1px solid #404040;box-shadow:inset -1px -1px 0 #808080, inset 1px 1px 0 #e6e3dc;"></div>
<div style="position:absolute;left:989px;top:614px;width:0;height:0;border-top:5px solid transparent;border-bottom:5px solid transparent;border-left:5px solid #000;"></div>
<div style="position:absolute;left:992px;top:319px;width:16px;height:34px;background:linear-gradient(#a9b9d1,#c3cfe2);border:1px solid #707070;border-right:none;"></div>
<div style="position:absolute;left:997px;top:330px;width:0;height:0;border-top:6px solid transparent;border-bottom:6px solid transparent;border-right:6px solid #4c5a78;"></div>
<div style="position:absolute;left:375px;top:629px;width:632px;height:2px;background:#c9c9dd;"></div>
<div style="position:absolute;left:0px;top:630px;width:375px;height:1px;background:#c9c9dd;"></div>
<div style="position:absolute;left:0px;top:631px;width:1007px;height:39px;background:linear-gradient(#eaedef 0px,#e8ebef 10px,#e4e7ef 15px,#dbe3ec 22px,#d4dfea 27px,#e4eaf1 31px,#edf1f5 33px,#edf1f5 36px,#dce7f0 38px,#dce7f0 39px);border-left:1px solid #bdbdd4;border-right:1px solid #c8c8dc;"></div>
<div style="position:absolute;left:0px;top:670px;width:1007px;height:1px;background:#c8c8dc;"></div>
<div class="t" style="left:911.20px;top:641px;font-size:14px;color:#000;font-weight:normal;transform:scaleX(1.0134);transform-origin:0 0;-webkit-text-stroke:0.12px currentColor;">Total: 16 items</div>
<div style="position:absolute;left:671px;top:180px;width:192px;height:419px;background:rgba(0,0,0,0.27);"></div>
<div style="position:absolute;left:663px;top:171px;width:196px;height:424px;background:#e3e3ec;border-top:1px solid #fff;border-left:1px solid #f2f2f6;border-right:1px solid #a8acb8;border-bottom:1px solid #a8acb8;"></div>
<div class="t" style="left:694.11px;top:179px;font-size:14px;color:#000;font-weight:normal;transform:scaleX(0.8867);transform-origin:0 0;-webkit-text-stroke:0.12px currentColor;">View</div>
<div class="t" style="left:693.12px;top:204px;font-size:14px;color:#000;font-weight:normal;transform:scaleX(0.9775);transform-origin:0 0;-webkit-text-stroke:0.12px currentColor;">Properties</div>
<div style="position:absolute;left:664px;top:229px;width:194px;height:1px;background:#b9b9b4;"></div>
<div style="position:absolute;left:664px;top:230px;width:194px;height:1px;background:#ffffff;"></div>
<div class="t" style="left:694.11px;top:237px;font-size:14px;color:#000;font-weight:normal;transform:scaleX(0.9230);transform-origin:0 0;-webkit-text-stroke:0.12px currentColor;">View Lineage</div>
<div class="t" style="left:694.10px;top:263px;font-size:14px;color:#000;font-weight:normal;transform:scaleX(0.9524);transform-origin:0 0;-webkit-text-stroke:0.12px currentColor;">View Metapedia Terms</div>
<div style="position:absolute;left:664px;top:288px;width:194px;height:1px;background:#b9b9b4;"></div>
<div style="position:absolute;left:664px;top:289px;width:194px;height:1px;background:#ffffff;"></div>
<div class="t" style="left:693.12px;top:295px;font-size:14px;color:#000;font-weight:normal;transform:scaleX(0.9800);transform-origin:0 0;-webkit-text-stroke:0.12px currentColor;">Modify</div>
<div class="t" style="left:693.53px;top:321px;font-size:14px;color:#000;font-weight:normal;transform:scaleX(0.9615);transform-origin:0 0;-webkit-text-stroke:0.12px currentColor;">Schedule</div>
<div class="t" style="left:693.16px;top:347px;font-size:14px;color:#000;font-weight:normal;transform:scaleX(0.9441);transform-origin:0 0;-webkit-text-stroke:0.12px currentColor;">Mobile Properties</div>
<div class="t" style="left:693.10px;top:372px;font-size:14px;color:#000;font-weight:normal;transform:scaleX(0.9976);transform-origin:0 0;-webkit-text-stroke:0.12px currentColor;">History</div>
<div style="position:absolute;left:664px;top:397px;width:194px;height:1px;background:#b9b9b4;"></div>
<div style="position:absolute;left:664px;top:398px;width:194px;height:1px;background:#ffffff;"></div>
<div class="t" style="left:693.53px;top:405px;font-size:14px;color:#000;font-weight:normal;transform:scaleX(0.9564);transform-origin:0 0;-webkit-text-stroke:0.12px currentColor;">Categories</div>
<div style="position:absolute;left:664px;top:430px;width:194px;height:1px;background:#b9b9b4;"></div>
<div style="position:absolute;left:664px;top:431px;width:194px;height:1px;background:#ffffff;"></div>
<div class="t" style="left:693.09px;top:437px;font-size:14px;color:#000;font-weight:normal;transform:scaleX(1.0076);transform-origin:0 0;-webkit-text-stroke:0.12px currentColor;">Document Link</div>
<div style="position:absolute;left:664px;top:462px;width:194px;height:1px;background:#b9b9b4;"></div>
<div style="position:absolute;left:664px;top:463px;width:194px;height:1px;background:#ffffff;"></div>
<div class="t" style="left:693.16px;top:470px;font-size:14px;color:#000;font-weight:normal;transform:scaleX(0.9442);transform-origin:0 0;-webkit-text-stroke:0.12px currentColor;">New</div>
<svg style="position:absolute;left:839px;top:475px" width="8" height="11" viewBox="0 0 8 11"><path d="M1.5 1 L6 5.5 L1.5 10" fill="none" stroke="#6a6a6a" stroke-width="1.3"/></svg>
<div style="position:absolute;left:664px;top:495px;width:194px;height:1px;background:#b9b9b4;"></div>
<div style="position:absolute;left:664px;top:496px;width:194px;height:1px;background:#ffffff;"></div>
<div class="t" style="left:693.54px;top:503px;font-size:14px;color:#000;font-weight:normal;transform:scaleX(0.9495);transform-origin:0 0;-webkit-text-stroke:0.12px currentColor;">Organize</div>
<svg style="position:absolute;left:839px;top:508px" width="8" height="11" viewBox="0 0 8 11"><path d="M1.5 1 L6 5.5 L1.5 10" fill="none" stroke="#6a6a6a" stroke-width="1.3"/></svg>
<div style="position:absolute;left:664px;top:528px;width:194px;height:1px;background:#b9b9b4;"></div>
<div style="position:absolute;left:664px;top:529px;width:194px;height:1px;background:#ffffff;"></div>
<div class="t" style="left:693.52px;top:535px;font-size:14px;color:#000;font-weight:normal;transform:scaleX(0.9711);transform-origin:0 0;-webkit-text-stroke:0.12px currentColor;">Send</div>
<svg style="position:absolute;left:839px;top:540px" width="8" height="11" viewBox="0 0 8 11"><path d="M1.5 1 L6 5.5 L1.5 10" fill="none" stroke="#6a6a6a" stroke-width="1.3"/></svg>
<div style="position:absolute;left:664px;top:560px;width:194px;height:1px;background:#b9b9b4;"></div>
<div style="position:absolute;left:664px;top:561px;width:194px;height:1px;background:#ffffff;"></div>
<div class="t" style="left:693.17px;top:568px;font-size:14px;color:#000;font-weight:normal;transform:scaleX(0.9320);transform-origin:0 0;-webkit-text-stroke:0.12px currentColor;">Details</div>
<svg style="position:absolute;left:662px;top:170px" width="15" height="23" viewBox="0 0 15 23">
<path d="M1.5 1.5 L1.5 18.2 L5.2 14.8 L8.1 21.3 L10.6 20.3 L7.8 13.8 L12.9 13.8 Z" fill="#fff" stroke="#000" stroke-width="1"/>
</svg>
</body></html>
